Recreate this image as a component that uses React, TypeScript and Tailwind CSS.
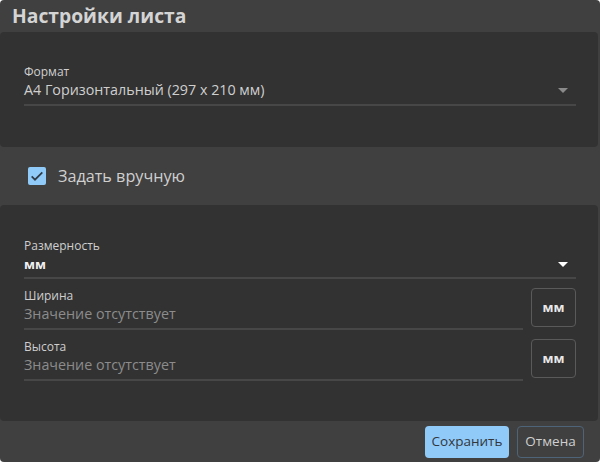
import React from 'react';

const font = { fontFamily: '"Open Sans", "Noto Sans", sans-serif' };

function Caret({ light }: { light?: boolean }) {
  return (
    <svg width="10" height="5" viewBox="0 0 10 5" className="shrink-0">
      <path d="M0 0h10L5 5z" fill={light ? '#ffffff' : '#8a8a8a'} />
    </svg>
  );
}

function Field({
  label,
  value,
  placeholder,
}: {
  label: string;
  value: string;
  placeholder?: boolean;
}) {
  return (
    <div className="flex-1 min-w-0">
      <div className="text-[12px] leading-[16px] text-[#cfcfcf]">{label}</div>
      <div
        className={
          placeholder
            ? 'text-[14.3px] leading-[20px] text-[#8c8c8c]'
            : 'text-[14.3px] leading-[20px] text-[#cfcfcf]'
        }
      >
        {value}
      </div>
      <div className="mt-[4px] h-[2px] bg-[#474747]" />
    </div>
  );
}

function UnitButton() {
  return (
    <div className="w-[45px] h-[39px] shrink-0 rounded-[4px] border border-[#5a5a5a] flex items-center justify-center text-[13px] font-bold text-[#e8e8e8]">
      мм
    </div>
  );
}

export default function App() {
  return (
    <div style={font} className="w-[600px] h-[462px] bg-[#404040] rounded-[4px] flex flex-col overflow-hidden">
      <div className="h-[32px] px-3 flex items-center text-[19.3px] font-bold text-[#d4d4d4] leading-none">
        Настройки листа
      </div>

      <div className="h-[115px] mr-[2px] bg-[#323232] rounded-[4px] pl-6 pr-[22px] pt-[32px]">
        <div className="text-[12px] leading-[16px] text-[#cfcfcf]">Формат</div>
        <div className="flex items-center justify-between pr-[8px]">
          <span className="text-[14.3px] leading-[20px] text-[#cfcfcf]">A4 Горизонтальный (297 x 210 мм)</span>
          <Caret />
        </div>
        <div className="mt-[4px] h-[2px] bg-[#474747]" />
      </div>

      <div className="h-[58px] flex items-center pl-[28px] gap-[12px]">
        <div className="w-[18px] h-[18px] rounded-[2px] bg-[#90caf9] flex items-center justify-center">
          <svg width="16" height="16" viewBox="0 0 24 24">
            <path d="M4 12.5l5 5 11-11" fill="none" stroke="#2f3a44" strokeWidth="2.6" />
          </svg>
        </div>
        <span className="text-[16.2px] text-[#cfcfcf]">Задать вручную</span>
      </div>

      <div className="h-[216px] mr-[2px] bg-[#323232] rounded-[4px] pl-6 pr-[22px] pt-[33px] flex flex-col gap-[9px]">
        <div>
          <div className="text-[12px] leading-[16px] text-[#cfcfcf]">Размерность</div>
          <div className="flex items-center justify-between pr-[8px]">
            <span className="text-[13px] leading-[20px] font-bold text-[#f0f0f0]">мм</span>
            <Caret light />
          </div>
          <div className="mt-[3px] h-[2px] bg-[#474747]" />
        </div>
        <div className="flex items-start gap-[8px]">
          <Field label="Ширина" value="Значение отсутствует" placeholder />
          <UnitButton />
        </div>
        <div className="flex items-start gap-[8px]">
          <Field label="Высота" value="Значение отсутствует" placeholder />
          <UnitButton />
        </div>
      </div>

      <div className="flex-1 flex items-center justify-end gap-[8px] pr-[16px]">
        <button className="w-[84px] h-[32px] rounded-[4px] bg-[#90caf9] text-[13.5px] text-[#33373b]">
          Сохранить
        </button>
        <button className="w-[67px] h-[32px] rounded-[4px] border border-[#4e6478] text-[13.5px] text-[#cfcfcf]">
          Отмена
        </button>
      </div>
    </div>
  );
}
